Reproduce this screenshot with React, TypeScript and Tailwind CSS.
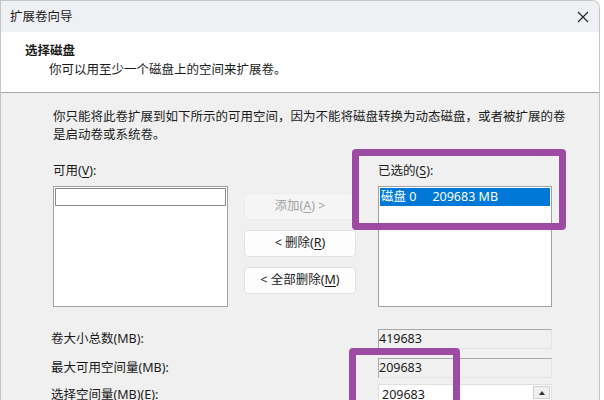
import React from "react";

function U({ children }: { children: React.ReactNode }) {
  return <span className="underline underline-offset-[2px] decoration-1">{children}</span>;
}

export default function App() {
  return (
    <div className="relative w-[604px] h-[400px] overflow-hidden bg-white text-[12.5px] text-[#1a1a1a] font-['Noto_Sans','Noto_Sans_CJK_SC',sans-serif]">
      <div className="w-[600px] h-[400px] flex flex-col border-t border-r border-l border-[#c4c4c4] rounded-tr-[8px] overflow-hidden">
        {/* Title bar */}
        <div className="h-[31px] shrink-0 bg-[#eef0f4] flex items-center justify-between pl-[9px] pr-[9px]">
          <span className="leading-[18px]">扩展卷向导</span>
          <svg width="12" height="12" viewBox="0 0 12 12" className="mr-[1px]">
            <path d="M1 1 L11 11 M11 1 L1 11" stroke="#222" strokeWidth="1.1" fill="none" />
          </svg>
        </div>
        {/* Header */}
        <div className="h-[61px] shrink-0 bg-white border-b border-[#a8a8a8] pl-[24px] pt-[10px]">
          <div className="font-bold leading-[18px]">选择磁盘</div>
          <div className="pl-[24px] mt-[1px] leading-[18px]">你可以用至少一个磁盘上的空间来扩展卷。</div>
        </div>
        {/* Body */}
        <div className="flex-1 bg-[#f0f0f0] pl-[52px] pt-[15px]">
          <div className="leading-[18px] whitespace-nowrap">
            <div>你只能将此卷扩展到如下所示的可用空间，因为不能将磁盘转换为动态磁盘，或者被扩展的卷</div>
            <div>是启动卷或系统卷。</div>
          </div>

          <div className="flex mt-[18px]">
            <div className="w-[175px] flex flex-col">
              <div className="leading-[18px]">可用(<U>V</U>):</div>
              <div className="mt-[6px] h-[121px] bg-white border border-[#a0a0a0] p-[1px]">
                <div className="h-[18px] border border-[#8a8a8a]" />
              </div>
            </div>

            <div className="ml-[16px] w-[112px] pt-[31px] flex flex-col gap-[10px]">
              <div className="h-[27px] flex items-center justify-center rounded-[4px] bg-[#f5f5f5] border border-[#ececec] text-[#a3a3a3]">
                添加(<U>A</U>) &gt;
              </div>
              <div className="h-[27px] flex items-center justify-center rounded-[4px] bg-[#fdfdfd] border border-[#e2e2e2]">
                &lt; 删除(<U>R</U>)
              </div>
              <div className="h-[27px] flex items-center justify-center rounded-[4px] bg-[#fdfdfd] border border-[#e2e2e2]">
                &lt; 全部删除(<U>M</U>)
              </div>
            </div>

            <div className="ml-[22px] w-[174px] flex flex-col">
              <div className="leading-[18px]">已选的(<U>S</U>):</div>
              <div className="mt-[6px] h-[121px] bg-white border border-[#a0a0a0] p-[1px]">
                <div className="h-[18px] bg-[#0078d7] text-white flex items-center pl-[1px] leading-[18px]">
                  <span>磁盘 0</span>
                  <span className="ml-[16px]">209683 MB</span>
                </div>
              </div>
            </div>
          </div>

          <div className="ml-[-2px] mt-[22px] flex flex-col">
            <div className="flex items-center h-[20px]">
              <div className="w-[327px]">卷大小总数(MB):</div>
              <div className="w-[174px] h-[20px] bg-[#f0f0f0] border-t border-l border-[#a8a8a8] border-r border-r-[#e4e4e4] border-b border-b-[#e4e4e4] flex items-center leading-[18px]">
                419683
              </div>
            </div>
            <div className="flex items-center h-[20px] mt-[9px]">
              <div className="w-[327px]">最大可用空间量(MB):</div>
              <div className="w-[174px] h-[20px] bg-[#f0f0f0] border-t border-l border-[#a8a8a8] border-r border-r-[#e4e4e4] border-b border-b-[#e4e4e4] flex items-center leading-[18px]">
                209683
              </div>
            </div>
            <div className="flex items-center h-[20px] mt-[7px]">
              <div className="w-[327px]">选择空间量(MB)(<U>E</U>):</div>
              <div className="w-[174px] h-[22px] bg-white border border-[#e0e0e0] flex items-center justify-between pl-[3px] pr-[1px] leading-[18px]">
                <span>209683</span>
                <div className="w-[17px] h-[13px] self-start mt-[1px] bg-[#f0f0f0] border border-[#cfcfcf] flex items-center justify-center">
                  <svg width="6" height="4" viewBox="0 0 6 4">
                    <path d="M0 4 L3 0 L6 4 Z" fill="#333" />
                  </svg>
                </div>
              </div>
            </div>
          </div>
        </div>
      </div>

      {/* Purple highlight overlays */}
      <div className="absolute left-[352px] top-[149px] w-[214px] h-[81px] border-[7px] border-[#9d4aa3] rounded-[4px]" />
      <div className="absolute left-[349px] top-[348px] w-[111px] h-[70px] border-[7px] border-[#9d4aa3] rounded-[4px]" />
    </div>
  );
}
